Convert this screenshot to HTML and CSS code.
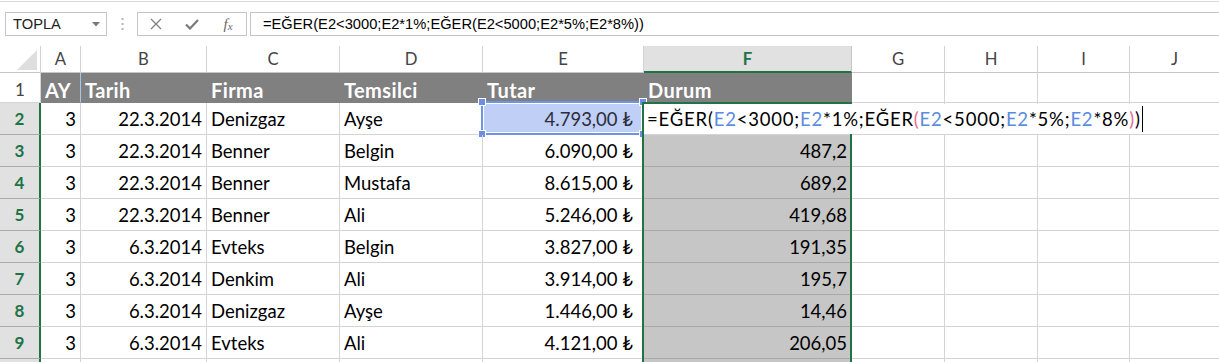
FILE: index.html
```html
<!DOCTYPE html>
<html lang="tr">
<head>
<meta charset="utf-8">
<title>Excel</title>
<link rel="stylesheet" href="styles.css">
</head>
<body>
<div class="toolbar">
  <div class="namebox">
    <span>TOPLA</span>
    <svg class="dd" width="8" height="5" viewBox="0 0 8 5"><polygon points="0,0 8,0 4,4.5" fill="#7a7a7a"/></svg>
  </div>
  <div class="sep">
    <svg width="3" height="12" viewBox="0 0 3 12"><rect x="0.5" y="0" width="2" height="2" fill="#b5b5b5"/><rect x="0.5" y="5" width="2" height="2" fill="#b5b5b5"/><rect x="0.5" y="10" width="2" height="2" fill="#b5b5b5"/></svg>
  </div>
  <div class="buttons">
    <span class="btn"><svg width="12" height="12" viewBox="0 0 12 12"><path d="M1 1L11 11M11 1L1 11" stroke="#808080" stroke-width="1.3" fill="none"/></svg></span>
    <span class="btn"><svg width="14" height="11" viewBox="0 0 14 11"><path d="M1 5.5L5 9.5L13 1" stroke="#7a7a7a" stroke-width="2.2" fill="none"/></svg></span>
    <span class="btn fx">f<span class="x">x</span></span>
  </div>
  <div class="formula">=EĞER(E2&lt;3000;E2*1%;EĞER(E2&lt;5000;E2*5%;E2*8%))</div>
</div>

<div class="sheet">
  <div class="c corner"><svg width="20" height="20" viewBox="0 0 20 20"><polygon points="20,0 20,20 0,20" fill="#dedede"/></svg></div>
  <div class="c ch">A</div><div class="c ch">B</div><div class="c ch">C</div><div class="c ch">D</div><div class="c ch">E</div><div class="c ch sel">F</div><div class="c ch">G</div><div class="c ch">H</div><div class="c ch">I</div><div class="c ch">J</div>

  <div class="c rh first">1</div>
  <div class="c hd a1">AY</div><div class="c hd">Tarih</div><div class="c hd">Firma</div><div class="c hd">Temsilci</div><div class="c hd">Tutar</div><div class="c hd">Durum</div><div class="c"></div><div class="c"></div><div class="c"></div><div class="c"></div>

  <div class="c rh sel">2</div>
  <div class="c r">3</div><div class="c r">22.3.2014</div><div class="c">Denizgaz</div><div class="c">Ayşe</div>
  <div class="c r cur e2">4.793,00 ₺<span class="refbox"><i class="h tl"></i><i class="h tr"></i><i class="h bl"></i><i class="h br"></i></span></div>
  <div class="c f2"><span class="editor">=EĞER(<span class="ref">E2</span>&lt;3000;<span class="ref">E2</span>*1%;EĞER<span class="pk">(</span><span class="ref">E2</span>&lt;5000;<span class="ref">E2</span>*5%;<span class="ref">E2</span>*8%<span class="pk">)</span>)<span class="caret"></span></span></div>
  <div class="c"></div><div class="c"></div><div class="c"></div><div class="c"></div>

  <div class="c rh sel">3</div>
  <div class="c r">3</div><div class="c r">22.3.2014</div><div class="c">Benner</div><div class="c">Belgin</div><div class="c r cur">6.090,00 ₺</div><div class="c r fs">487,2</div><div class="c"></div><div class="c"></div><div class="c"></div><div class="c"></div>

  <div class="c rh sel">4</div>
  <div class="c r">3</div><div class="c r">22.3.2014</div><div class="c">Benner</div><div class="c">Mustafa</div><div class="c r cur">8.615,00 ₺</div><div class="c r fs">689,2</div><div class="c"></div><div class="c"></div><div class="c"></div><div class="c"></div>

  <div class="c rh sel">5</div>
  <div class="c r">3</div><div class="c r">22.3.2014</div><div class="c">Benner</div><div class="c">Ali</div><div class="c r cur">5.246,00 ₺</div><div class="c r fs">419,68</div><div class="c"></div><div class="c"></div><div class="c"></div><div class="c"></div>

  <div class="c rh sel">6</div>
  <div class="c r">3</div><div class="c r">6.3.2014</div><div class="c">Evteks</div><div class="c">Belgin</div><div class="c r cur">3.827,00 ₺</div><div class="c r fs">191,35</div><div class="c"></div><div class="c"></div><div class="c"></div><div class="c"></div>

  <div class="c rh sel">7</div>
  <div class="c r">3</div><div class="c r">6.3.2014</div><div class="c">Denkim</div><div class="c">Ali</div><div class="c r cur">3.914,00 ₺</div><div class="c r fs">195,7</div><div class="c"></div><div class="c"></div><div class="c"></div><div class="c"></div>

  <div class="c rh sel">8</div>
  <div class="c r">3</div><div class="c r">6.3.2014</div><div class="c">Denizgaz</div><div class="c">Ayşe</div><div class="c r cur">1.446,00 ₺</div><div class="c r fs">14,46</div><div class="c"></div><div class="c"></div><div class="c"></div><div class="c"></div>

  <div class="c rh sel">9</div>
  <div class="c r">3</div><div class="c r">6.3.2014</div><div class="c">Evteks</div><div class="c">Ali</div><div class="c r cur">4.121,00 ₺</div><div class="c r fs">206,05</div><div class="c"></div><div class="c"></div><div class="c"></div><div class="c"></div>

  <div class="c rh sel"></div>
  <div class="c"></div><div class="c"></div><div class="c"></div><div class="c"></div><div class="c"></div><div class="c fs"></div><div class="c"></div><div class="c"></div><div class="c"></div><div class="c"></div>

  <div class="selection"></div>
</div>
</body>
</html>
```

FILE: styles.css
```css
html, body {
  margin: 0;
  padding: 0;
}
body {
  width: 1219px;
  height: 362px;
  overflow: hidden;
  background: #fff;
  font-family: Lato, "Noto Sans", sans-serif;
}

/* ---------- formula bar ---------- */
.toolbar {
  margin-top: 1px;
  border-top: 1px solid #d9d9d9;
  height: 45px;
  box-sizing: border-box;
  padding: 10px 0 0 5px;
  display: flex;
  align-items: flex-start;
  font-family: "Liberation Sans", Arial, sans-serif;
  font-size: 14.7px;
  color: #222;
}
.namebox {
  width: 102px;
  height: 24px;
  box-sizing: border-box;
  border: 1px solid #c6c6c6;
  display: flex;
  align-items: center;
  justify-content: space-between;
  padding: 0 6px 0 7px;
}
.namebox span { line-height: 22px; }
.sep {
  width: 30px;
  height: 24px;
  display: flex;
  align-items: center;
  justify-content: center;
}
.buttons {
  width: 110px;
  height: 24px;
  box-sizing: border-box;
  border: 1px solid #c6c6c6;
  display: flex;
  align-items: center;
}
.btn {
  width: 36px;
  height: 22px;
  display: flex;
  align-items: center;
  justify-content: center;
}
.btn.fx {
  font-family: "Liberation Serif", serif;
  font-style: italic;
  font-size: 15px;
  color: #6a6a6a;
}
.btn.fx .x { font-size: 11px; margin-top: 3px; }
.formula {
  flex: 1;
  margin-left: 3px;
  height: 24px;
  box-sizing: border-box;
  border: 1px solid #c6c6c6;
  border-right: none;
  padding-left: 12px;
  line-height: 22px;
  color: #000;
  white-space: nowrap;
}

/* ---------- sheet ---------- */
.sheet {
  position: relative;
  display: grid;
  grid-template-columns: 41px 40px 126px 133px 143px 161px 208px 93px 93px 92px 90px;
  grid-template-rows: 27px 30px repeat(9, 32px);
}
.c {
  box-sizing: border-box;
  border-right: 1px solid #d4d4d4;
  border-bottom: 1px solid #d4d4d4;
  display: flex;
  align-items: center;
  padding: 0 4px;
  font-size: 18.5px;
  color: #000;
  white-space: nowrap;
  position: relative;
}
.c.r { justify-content: flex-end; }
.c.cur { padding-right: 10px; }

.corner {
  border-bottom-color: #c6c6c6;
  align-items: flex-end;
  justify-content: flex-end;
  padding: 0 3px 2px 0;
}
.ch {
  justify-content: center;
  font-size: 16.7px;
  color: #444;
  border-bottom-color: #c6c6c6;
  padding: 0;
}
.ch.sel {
  background: #e1e1e1;
  color: #217346;
  font-weight: bold;
  border-bottom: 2px solid #217346;
  border-right-color: #c6c6c6;
}
.rh {
  justify-content: center;
  font-size: 17px;
  color: #444;
  padding: 0;
}
.rh.first { padding-top: 3px; }
.rh.sel {
  background: #e1e1e1;
  color: #217346;
  font-weight: bold;
  border-right: 2px solid #217346;
  border-bottom-color: #ababab;
}

.hd {
  background: #808080;
  color: #fff;
  font-weight: bold;
  font-size: 20px;
  letter-spacing: 0.4px;
  border-right-color: #808080;
  border-bottom-color: #808080;
  padding-top: 4px;
}
.hd.a1 { border-right-color: #a9c4ea; }

.fs {
  background: #c6c6c6;
  border-bottom-color: #a9a9a9;
}

/* E2 reference highlight */
.e2 {
  background: #bfcff5;
  color: #2c2c3c;
}
.refbox {
  position: absolute;
  left: -2px;
  top: -2px;
  right: -1px;
  bottom: -1px;
  border: 2px solid #6f94e6;
  box-shadow: inset 0 0 0 1px #fff;
}
.h {
  position: absolute;
  width: 6px;
  height: 6px;
  background: #6a8fe3;
  border: 1px solid #fff;
}
.h.tl { left: -5px; top: -5px; }
.h.tr { right: -5px; top: -5px; }
.h.bl { left: -5px; bottom: -5px; }
.h.br { right: -5px; bottom: -5px; }

/* F2 in-cell editor */
.f2 { padding: 0; }
.editor {
  position: absolute;
  left: 0;
  top: 1px;
  width: 498px;
  height: 30px;
  background: #fff;
  z-index: 3;
  display: flex;
  align-items: center;
  padding-left: 3px;
  box-sizing: border-box;
  font-size: 18.5px;
  letter-spacing: 0.8px;
  color: #000;
}
.ref { color: #5a8ddf; }
.pk { color: #e26a8e; }
.caret {
  display: inline-block;
  width: 1px;
  height: 26px;
  background: #000;
  margin-left: 1px;
}

/* selection F2:F10 */
.selection {
  position: absolute;
  left: 642px;
  top: 56px;
  width: 210px;
  height: 400px;
  box-sizing: border-box;
  border: 2px solid #217346;
  border-bottom: none;
  pointer-events: none;
  z-index: 2;
}
```
